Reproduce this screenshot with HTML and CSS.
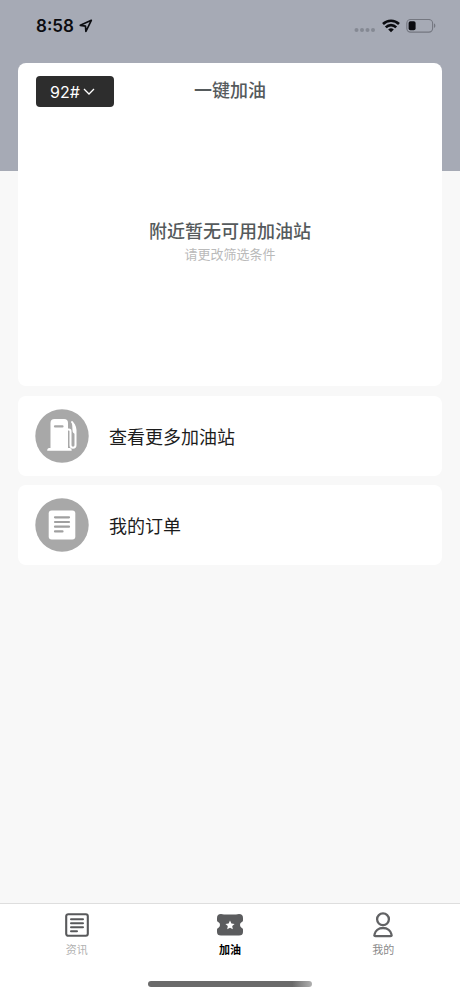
FILE: index.html
```html
<!DOCTYPE html>
<html lang="zh-CN">
<head>
<meta charset="utf-8">
<meta name="viewport" content="width=device-width, initial-scale=1">
<title>一键加油</title>
<link rel="stylesheet" href="styles.css">
</head>
<body>
<header class="status">
  <span class="time">8:58</span>
  <svg class="locate" width="14" height="14" viewBox="0 0 14 14" aria-hidden="true"><path d="M12.300 1.300 1.300 6.300l5.200.9.400 5.300z" fill="none" stroke="#0b0c10" stroke-width="1.700" stroke-linejoin="round"/></svg>
  <div class="signals">
    <svg width="22" height="6" viewBox="0 0 22 6" aria-hidden="true"><g fill="#858993"><circle cx="2.5" cy="3" r="2"/><circle cx="8" cy="3" r="2"/><circle cx="13.500" cy="3" r="2"/><circle cx="19" cy="3" r="2"/></g></svg>
    <svg class="wifi" width="18" height="14" viewBox="0 0 18 14" aria-hidden="true"><g fill="none" stroke="#0b0c10" stroke-width="2.600"><path d="M1 5a11.500 11.500 0 0 1 16 0"/><path d="M3.800 8.300a7.400 7.400 0 0 1 10.400 0"/></g><path d="M6.200 10.500a4.200 4.200 0 0 1 5.600 0L9 13.300z" fill="#0b0c10"/></svg>
    <svg width="30" height="14" viewBox="0 0 30 14" aria-hidden="true"><rect x=".8" y=".5" width="25.800" height="12.600" rx="3.800" fill="none" stroke="#747780" stroke-width="1.100"/><rect x="2.600" y="2.300" width="7" height="9" rx="1.800" fill="#0b0c10"/><path d="M28 4.600V9c1.800-.6 1.800-3.800 0-4.400z" fill="#747780"/></svg>
  </div>
</header>
<main class="content">
  <section class="card station">
    <div class="station-head">
      <div class="grade">
        <select class="grade-select" aria-label="油号"><option>92#</option><option>95#</option><option>98#</option></select>
        <svg class="chevron" width="12" height="8" viewBox="0 0 12 8" aria-hidden="true"><path d="m1 1 5 5 5-5" fill="none" stroke="#fff" stroke-width="1.300"/></svg>
      </div>
      <h1 class="title">一键加油</h1>
    </div>
    <div class="empty">
      <h2 class="title">附近暂无可用加油站</h2>
      <p class="hint">请更改筛选条件</p>
    </div>
  </section>
  <a class="card link" href="#stations">
    <svg width="54" height="54" viewBox="0 0 54 54" aria-hidden="true"><circle cx="27" cy="27" r="26.700" fill="#a8a8a8"/><path d="M15.500 39V14q0-4 4-4h9.500q4 0 4 4v25h1.700q2 0 2 2.800H12.200q0-2.800 2-2.800z" fill="#fff"/><path d="M20 17.400h7.500" stroke="#a8a8a8" stroke-width="2.200" stroke-linecap="round"/><path d="M33 20.500h.9q1.600 0 1.600 1.800v14q0 2.400 2.500 2.400t2.500-2.400V21q0-2.500-1.200-4.600L37 13" fill="none" stroke="#fff" stroke-width="2" stroke-linecap="round" stroke-linejoin="round"/><path d="m37 13 3.500 5.500v6.500q-3-.7-3-3.800z" fill="#fff"/></svg>
    <span>查看更多加油站</span>
  </a>
  <a class="card link" href="#orders">
    <svg width="54" height="54" viewBox="0 0 54 54" aria-hidden="true"><circle cx="27" cy="27" r="26.700" fill="#a8a8a8"/><rect x="13.700" y="12.500" width="26.600" height="29" rx="3" fill="#fff"/><path d="M20 19.300h14M20 24h14M20 28.700h14M20 33.400h7.500" stroke="#a0a0a0" stroke-width="2.200" stroke-linecap="round"/></svg>
    <span>我的订单</span>
  </a>
</main>
<nav class="tabs">
  <a class="tab news" href="#news">
    <svg width="26" height="26" viewBox="0 0 26 26" aria-hidden="true"><rect x="2.200" y="2.200" width="21.600" height="21.600" rx="2" fill="none" stroke="#58595b" stroke-width="2.100"/><path d="M7 7.300h12M7 11.300h12M7 15.300h12M7 19.300h6" stroke="#58595b" stroke-width="2" stroke-linecap="round"/></svg>
    <span>资讯</span>
  </a>
  <a class="tab active" href="#fuel" aria-current="page">
    <svg width="26" height="26" viewBox="0 0 26 26" aria-hidden="true"><path d="M4 2q1.500 0 3 .6h12q1.500-.6 3-.6 4 0 4 4v2.500q0 1.300-1.500 1.800-1.500.8-1.500 2.700t1.500 2.700q1.500.5 1.500 1.800V20q0 3.500-4 3.500H4q-4 0-4-3.500v-2.500q0-1.300 1.500-1.800Q3 14.900 3 13t-1.500-2.700Q0 9.800 0 8.500V6q0-4 4-4z" fill="#5b5c5e"/><path d="m13 8.600 1.400 2.900 3.200.4-2.400 2.200.6 3.200-2.800-1.500-2.800 1.500.6-3.200-2.400-2.200 3.200-.4z" fill="#fff"/></svg>
    <span>加油</span>
  </a>
  <a class="tab" href="#mine">
    <svg width="26" height="26" viewBox="0 0 26 26" aria-hidden="true"><g fill="none" stroke="#626365" stroke-width="2.300"><circle cx="13" cy="7.300" r="5.900"/><path d="M5.600 24.200h14.800q1.500 0 1.200-1.500c-.7-4-4.200-6.700-8.600-6.700s-7.900 2.700-8.600 6.700q-.3 1.500 1.200 1.500z"/></g></svg>
    <span>我的</span>
  </a>
</nav>
<div class="home"></div>
</body>
</html>
```
FILE: styles.css
```css
* { box-sizing: border-box; }

body {
  margin: 0;
  min-height: 100vh;
  display: flex;
  flex-direction: column;
  background: linear-gradient(#a6aab5 171px, #f8f8f8 171px);
  font-family: "Noto Sans CJK SC", sans-serif;
  color: #1c1c1c;
}

.status {
  display: flex;
  align-items: center;
  gap: 5px;
  height: 51px;
  padding: 0 24px 0 36px;
}

.time {
  font: 600 17px/24px Inter, sans-serif;
  color: #0b0c10;
}

.signals {
  display: flex;
  align-items: center;
  gap: 6px;
  margin-left: auto;
}

.signals svg:first-child { align-self: flex-end; }

.content {
  flex: 1;
  display: flex;
  flex-direction: column;
  gap: 9px;
  padding: 12px 18px;
}

.card {
  background: #fff;
  border-radius: 8px;
}

.station {
  display: flex;
  flex-direction: column;
  min-height: 323px;
  margin-bottom: 1px;
  padding: 13px 18px;
}

.station-head {
  display: grid;
  grid-template-columns: 1fr auto 1fr;
  align-items: start;
}

.grade {
  position: relative;
  justify-self: start;
}

.grade-select {
  display: block;
  appearance: none;
  width: 78px;
  height: 31px;
  padding: 0 0 0 14px;
  border: 0;
  border-radius: 4px;
  background: #2d2d2d;
  color: #fff;
  font: 400 16px/24px Inter, sans-serif;
}

.chevron {
  position: absolute;
  top: 12px;
  right: 19px;
  pointer-events: none;
}

.title {
  margin: 0;
  font-size: 18px;
  line-height: 26px;
  font-weight: 500;
  color: #555a5c;
}

.empty {
  padding-top: 110px;
  text-align: center;
}

.hint {
  margin: 0;
  font-size: 13px;
  line-height: 22px;
  color: #bababa;
}

.link {
  display: flex;
  align-items: center;
  gap: 20px;
  min-height: 80px;
  padding: 0 17px;
  color: inherit;
  font-size: 18px;
  line-height: 26px;
  text-decoration: none;
}

.tabs {
  display: grid;
  grid-template-columns: repeat(3, 1fr);
  height: 72px;
  padding-top: 8px;
  border-top: 1px solid #dedede;
  background: #fff;
}

.tab {
  display: flex;
  flex-direction: column;
  align-items: center;
  gap: 3px;
  color: #8a8a8a;
  font-size: 11px;
  line-height: 16px;
  text-decoration: none;
}

.news { color: #b2b2b2; }

.active {
  color: #000;
  font-weight: 700;
}

.home {
  display: flex;
  justify-content: center;
  padding: 6px 0 9px;
  background: #fff;
}

.home::before {
  content: "";
  width: 164px;
  height: 6px;
  border-radius: 3px;
  background: linear-gradient(90deg, #6a6a6a 88%, #b0b0b0);
}
```
